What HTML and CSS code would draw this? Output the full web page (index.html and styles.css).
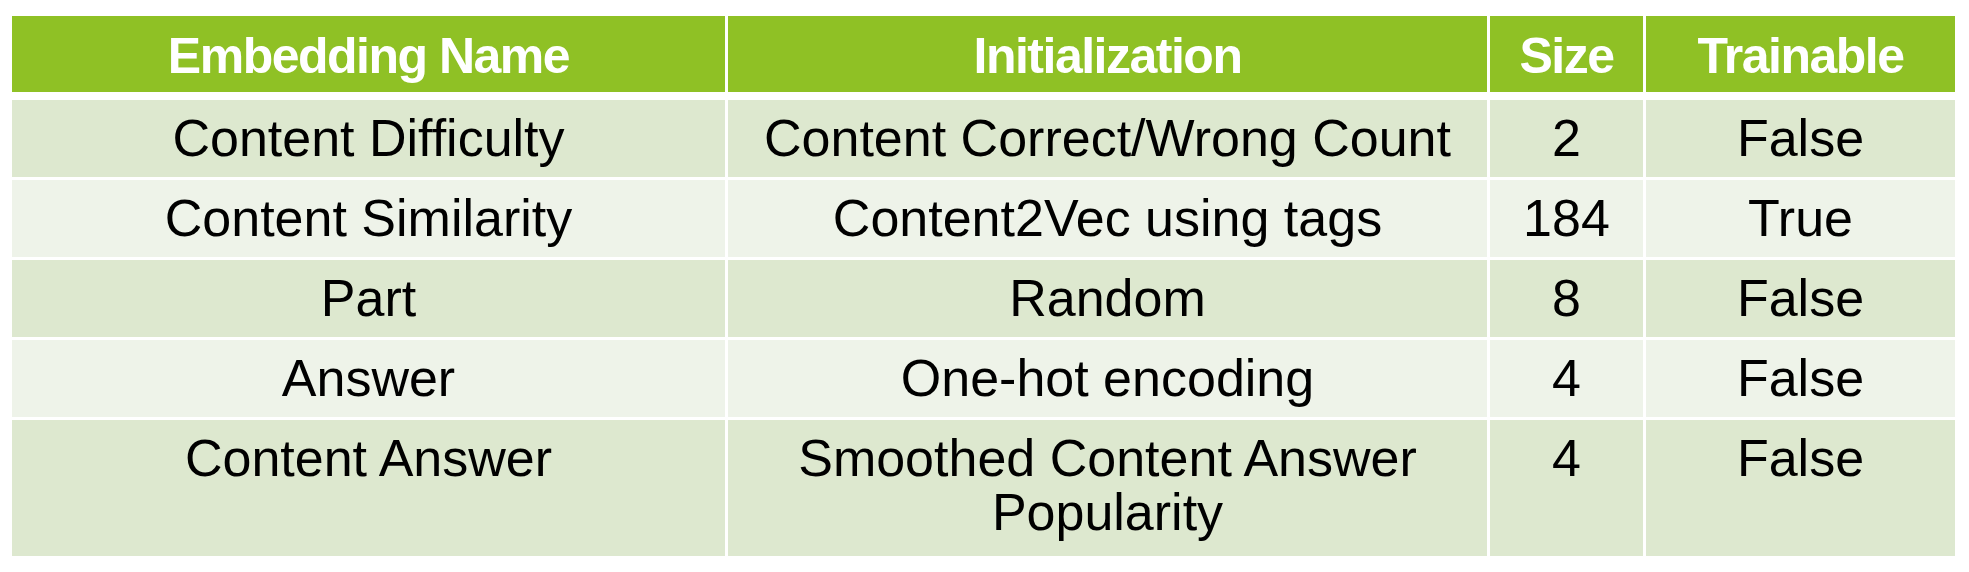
FILE: index.html
```html
<!DOCTYPE html>
<html>
<head>
<meta charset="utf-8">
<title>Embeddings</title>
<link rel="stylesheet" href="styles.css">
</head>
<body>
<table class="emb">
  <colgroup>
    <col class="c-name">
    <col class="c-init">
    <col class="c-size">
    <col class="c-train">
  </colgroup>
  <thead>
    <tr class="head">
      <th>Embedding Name</th>
      <th>Initialization</th>
      <th>Size</th>
      <th>Trainable</th>
    </tr>
  </thead>
  <tbody>
    <tr class="row odd">
      <td>Content Difficulty</td>
      <td>Content Correct/Wrong Count</td>
      <td>2</td>
      <td>False</td>
    </tr>
    <tr class="row even">
      <td>Content Similarity</td>
      <td>Content2Vec using tags</td>
      <td>184</td>
      <td>True</td>
    </tr>
    <tr class="row odd">
      <td>Part</td>
      <td>Random</td>
      <td>8</td>
      <td>False</td>
    </tr>
    <tr class="row even">
      <td>Answer</td>
      <td>One-hot encoding</td>
      <td>4</td>
      <td>False</td>
    </tr>
    <tr class="row odd tall">
      <td>Content Answer</td>
      <td>Smoothed Content Answer Popularity</td>
      <td>4</td>
      <td>False</td>
    </tr>
  </tbody>
</table>
</body>
</html>
```
FILE: styles.css
```css
html, body {
  margin: 0;
  padding: 0;
  background: #ffffff;
}

body {
  font-family: "Liberation Sans", Arial, sans-serif;
}

.emb {
  margin: 13px 0 0 9px;
  border-collapse: separate;
  border-spacing: 3px;
  table-layout: fixed;
  width: 1949px;
}

.c-name { width: 713px; }
.c-init { width: 759px; }
.c-size { width: 153px; }
.c-train { width: 309px; }

.head th {
  background: #8fc125;
  background-clip: padding-box;
  border-bottom: 5px solid #ffffff;
  color: #ffffff;
  font-weight: bold;
  font-size: 50px;
  letter-spacing: -1.5px;
  line-height: 54px;
  padding: 13px 0 9px;
  text-align: center;
  vertical-align: top;
}

.row {
  height: 77px;
}

.row.tall {
  height: 136px;
}

.row td {
  color: #000000;
  font-size: 52px;
  line-height: 54px;
  padding: 11px 24px 0;
  text-align: center;
  vertical-align: top;
}

.odd td {
  background: #dde8cf;
}

.even td {
  background: #eef3e9;
}
```
